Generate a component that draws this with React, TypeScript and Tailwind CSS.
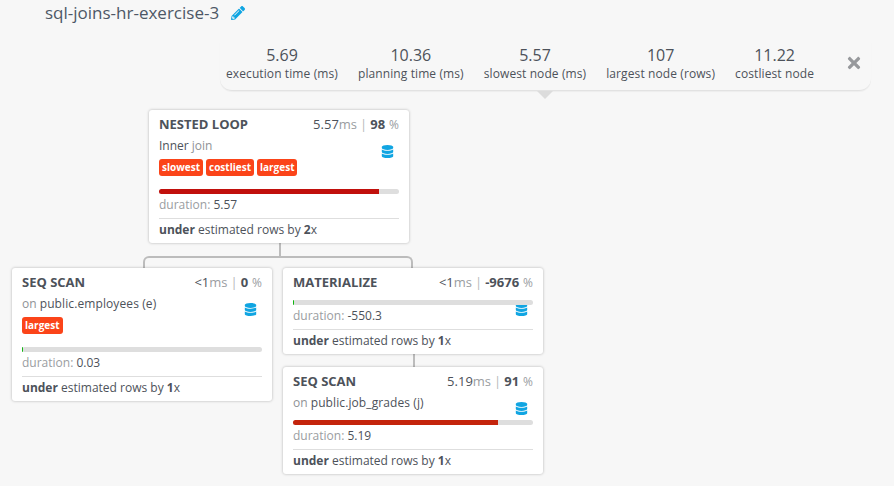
import React from 'react';
import { FaDatabase, FaPencilAlt, FaTimes } from 'react-icons/fa';

const stats = [
  { value: '5.69', label: 'execution time (ms)' },
  { value: '10.36', label: 'planning time (ms)' },
  { value: '5.57', label: 'slowest node (ms)' },
  { value: '107', label: 'largest node (rows)' },
  { value: '11.22', label: 'costliest node' },
];

type NodeProps = {
  title: string;
  time: string;
  percent: string;
  join?: boolean;
  relation?: string;
  tags?: string[];
  bar: string;
  barColor: string;
  duration: string;
  factor: string;
};

function PlanNode({ title, time, percent, join, relation, tags, bar, barColor, duration, factor }: NodeProps) {
  return (
    <div className="relative w-[260px] rounded-[3px] bg-white px-[10px] pt-[5px] pb-[3px] shadow-[0_0_3px_rgba(0,0,0,0.28)]">
      <FaDatabase className="absolute right-[15px] top-[35px] text-[13px] text-[#10a5e2]" />
      <div className="flex h-[20px] items-center justify-between">
        <span className="text-[13px] font-bold text-[#4d525a]">{title}</span>
        <span className="whitespace-nowrap text-[13px] text-[#9a9da1]">
          <span className="text-[#4d525a]">{time}</span>ms
          <span className="mx-[3px] text-[#b5b7ba]">|</span>
          <span className="font-bold text-[#4d525a]">{percent}</span>
          <span className="ml-[4px] text-[12px]">%</span>
        </span>
      </div>
      {join && (
        <div className="mt-px flex h-[20px] items-center text-[12px] text-[#8f9296]">
          <span>
            <span className="text-[#4d525a]">Inner</span> join
          </span>
        </div>
      )}
      {relation && (
        <div className="mt-px flex h-[20px] items-center text-[12px] text-[#8f9296]">
          <span>
            on <span className="tracking-[0.1px] text-[#4d525a]">{relation}</span>
          </span>
        </div>
      )}
      {tags && (
        <div className="mt-[3px] flex h-[17px] gap-[3px]">
          {tags.map((tag) => (
            <span key={tag} className="flex h-[17px] items-center rounded-[3px] bg-[#fb4419] px-[3px] text-[10px] font-bold text-white">
              {tag}
            </span>
          ))}
        </div>
      )}
      <div className={`${tags ? 'mt-[13px]' : 'mt-[7px]'} relative h-[5px] w-[240px] rounded-full bg-[#dedede]`}>
        <div className={`h-full rounded-l-full ${bar} ${barColor}`} />
      </div>
      <div className="mt-[2px] h-[18px] text-[12px] leading-[18px] text-[#9a9da1]">
        duration: <span className="text-[#4d525a]">{duration}</span>
      </div>
      <div className="mt-[4px] h-[22px] border-t border-[#dedede] text-[12px] leading-[22px] text-[#4d525a]">
        <b>under</b> estimated rows by <b>{factor}</b>x
      </div>
    </div>
  );
}

export default function App() {
  return (
    <div className="h-[486px] w-[894px] overflow-hidden bg-[#f7f7f7] font-['Open_Sans','Noto_Sans',sans-serif]">
      <div className="flex h-[26px] items-center pl-[45px] text-[17px] text-[#4d5766]">
        <span>sql-joins-hr-exercise-3</span>
        <FaPencilAlt className="ml-[12px] text-[14px] text-[#10a5e2]" />
      </div>

      <div className="relative ml-[220px] mt-[15px] flex h-[50px] w-[651px] items-start gap-[20px] rounded-b-[12px] border-b border-[#e2e2e2] pl-[6px] pt-[3px] shadow-[0_1px_1px_rgba(0,0,0,0.04)]">
        {stats.map((s) => (
          <div key={s.label} className="shrink-0 text-center text-[#4d525a]">
            <div className="text-[16px] leading-[22px]">{s.value}</div>
            <div className="whitespace-nowrap text-[12px] leading-[16px] tracking-[0.1px]">{s.label}</div>
          </div>
        ))}
        <FaTimes className="absolute right-[8px] top-[13px] text-[18px] text-[#97999c]" />
        <div className="absolute left-[317px] top-[50px] h-0 w-0 border-x-[8px] border-t-[8px] border-x-transparent border-t-[#dcdcdc]" />
      </div>

      <div className="ml-[12px] mt-[19px] w-[531px]">
        <div className="ml-[137px]">
          <PlanNode
            title="NESTED LOOP"
            time="5.57"
            percent="98"
            join
            tags={['slowest', 'costliest', 'largest']}
            bar="w-[220px]"
            barColor="bg-[#c1100c]"
            duration="5.57"
            factor="2"
          />
        </div>
        <div className="ml-[267px] h-[13px] w-[2px] bg-[#bcbcbc]" />
        <div className="ml-[131px] h-[12px] w-[270px] rounded-t-[6px] border-x-2 border-t-2 border-[#bcbcbc]" />
        <div className="flex items-start gap-[11px]">
          <PlanNode
            title="SEQ SCAN"
            time="<1"
            percent="0"
            relation="public.employees (e)"
            tags={['largest']}
            bar="w-[1px]"
            barColor="bg-[#11b511]"
            duration="0.03"
            factor="1"
          />
          <div>
            <PlanNode
              title="MATERIALIZE"
              time="<1"
              percent="-9676"
              bar="w-[1px]"
              barColor="bg-[#11b511]"
              duration="-550.3"
              factor="1"
            />
            <div className="ml-[130px] h-[13px] w-[2px] bg-[#bcbcbc]" />
            <PlanNode
              title="SEQ SCAN"
              time="5.19"
              percent="91"
              relation="public.job_grades (j)"
              bar="w-[205px]"
              barColor="bg-[#c4240c]"
              duration="5.19"
              factor="1"
            />
          </div>
        </div>
      </div>
    </div>
  );
}
